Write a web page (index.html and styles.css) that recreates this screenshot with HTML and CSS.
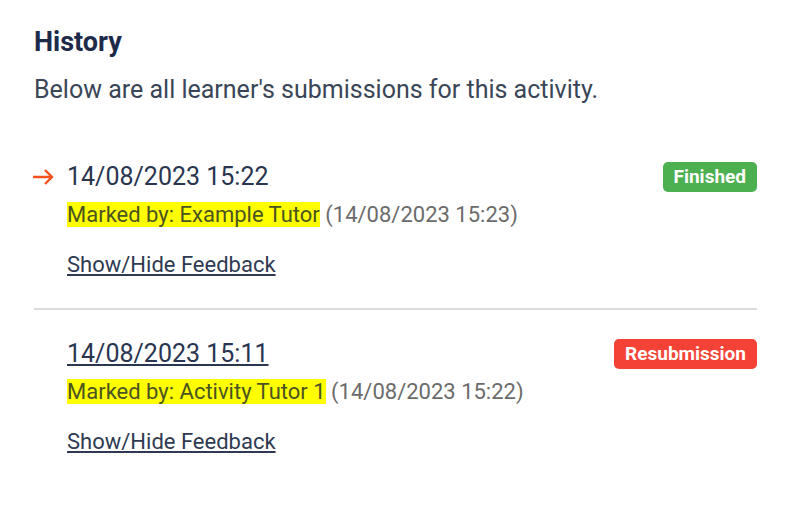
FILE: index.html
```html
<!DOCTYPE html>
<html>
<head>
    <meta charset="UTF-8">
    <title>History</title>
    <link rel="stylesheet" href="styles.css">
</head>
<body>
    <div class="panel">
        <h2 class="panel-title">History</h2>
        <p class="panel-intro">Below are all learner's submissions for this activity.</p>

        <div class="entry">
            <div class="entry-marker">
                <svg width="23" height="18" viewBox="0 0 23 18"><path d="M1 9H20M13 2L20 9L13 16" fill="none" stroke="#f4511e" stroke-width="2.4"/></svg>
            </div>
            <div class="entry-body">
                <div class="entry-head">
                    <span class="entry-date">14/08/2023 15:22</span>
                    <span class="badge badge-finished">Finished</span>
                </div>
                <div class="entry-marked"><span class="hl">Marked by: Example Tutor</span> (14/08/2023 15:23)</div>
                <a class="entry-link" href="#">Show/Hide Feedback</a>
            </div>
        </div>

        <div class="entry entry-last">
            <div class="entry-marker"></div>
            <div class="entry-body">
                <div class="entry-head">
                    <a class="entry-date" href="#">14/08/2023 15:11</a>
                    <span class="badge badge-resub">Resubmission</span>
                </div>
                <div class="entry-marked"><span class="hl">Marked by: Activity Tutor 1</span> (14/08/2023 15:22)</div>
                <a class="entry-link" href="#">Show/Hide Feedback</a>
            </div>
        </div>
    </div>
</body>
</html>
```

FILE: styles.css
```css
body {
    margin: 0;
    background: #ffffff;
    font-family: Roboto, "Liberation Sans", sans-serif;
}

.panel {
    padding: 26px 30px 40px 34px;
}

.panel-title {
    margin: 0;
    font-size: 27px;
    font-weight: 700;
    color: #1e2a4a;
    line-height: 32px;
}

.panel-intro {
    margin: 16px 0 0;
    font-size: 25px;
    line-height: 32px;
    color: #3a4658;
}

.entry {
    display: flex;
    padding: 55px 0 30px;
    border-bottom: 2px solid #dcdcdc;
}

.entry + .entry {
    padding-top: 28px;
}

.entry-last {
    border-bottom: none;
}

.entry-marker {
    width: 33px;
    flex: none;
    padding-top: 7px;
    margin-left: -2px;
    padding-right: 2px;
}

.entry-body {
    flex: 1;
}

.entry-head {
    display: flex;
    justify-content: space-between;
    align-items: center;
}

.entry-date {
    font-size: 25px;
    line-height: 32px;
    color: #2a3550;
}

a.entry-date {
    text-decoration: underline;
    text-underline-offset: 2px;
}

.badge {
    color: #ffffff;
    font-size: 19px;
    font-weight: 700;
    padding: 5px 11px;
    border-radius: 5px;
    line-height: 20px;
}

.badge-finished {
    background: #4caf50;
}

.badge-resub {
    background: #f44336;
}

.entry-marked {
    margin-top: 9px;
    font-size: 22px;
    line-height: 26px;
    color: #6b6b6b;
}

.hl {
    background: #ffff00;
    color: #4b5320;
}

.entry-link {
    display: inline-block;
    margin-top: 24px;
    font-size: 22px;
    line-height: 26px;
    color: #2f3a52;
    text-decoration: underline;
}
```
